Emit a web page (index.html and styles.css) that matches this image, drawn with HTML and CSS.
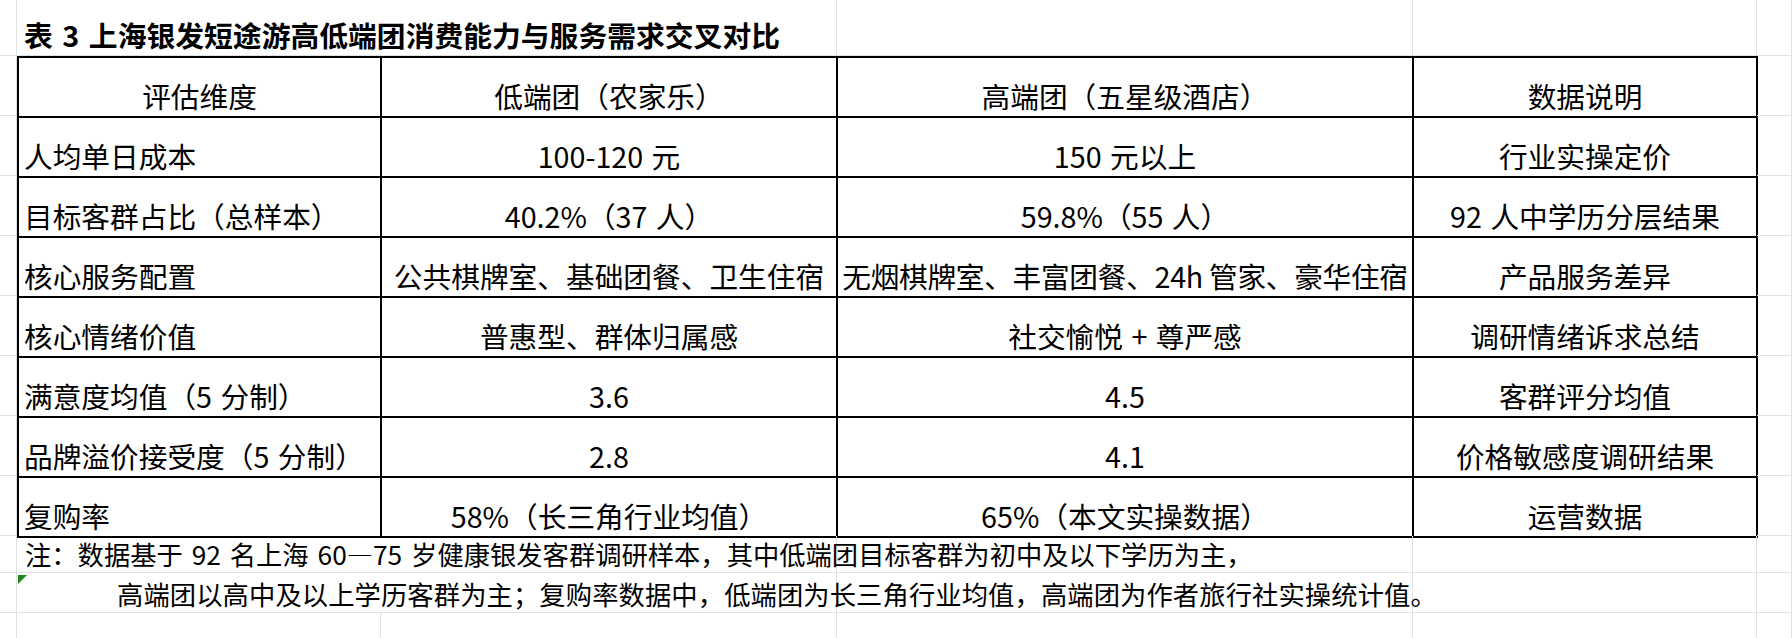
FILE: index.html
```html
<!DOCTYPE html>
<html lang="zh-CN">
<head>
<meta charset="utf-8">
<title>表 3 上海银发短途游高低端团消费能力与服务需求交叉对比</title>
<link rel="stylesheet" href="styles.css">
</head>
<body>
<div class="sheet">
  <div class="c"></div>
  <div class="c title">表 3 上海银发短途游高低端团消费能力与服务需求交叉对比</div>
  <div class="c"></div>
  <div class="c"></div>
  <div class="c"></div>

  <div class="c"></div>
  <table class="data">
    <colgroup>
      <col class="w1"><col class="w2"><col class="w3"><col class="w4">
    </colgroup>
    <tr><td class="ctr">评估维度</td><td>低端团（农家乐）</td><td>高端团（五星级酒店）</td><td>数据说明</td></tr>
    <tr><td class="lft">人均单日成本</td><td>100-120 元</td><td>150 元以上</td><td>行业实操定价</td></tr>
    <tr><td class="lft">目标客群占比（总样本）</td><td>40.2%（37 人）</td><td>59.8%（55 人）</td><td>92 人中学历分层结果</td></tr>
    <tr><td class="lft">核心服务配置</td><td>公共棋牌室、基础团餐、卫生住宿</td><td class="tight">无烟棋牌室、丰富团餐、24h 管家、豪华住宿</td><td>产品服务差异</td></tr>
    <tr><td class="lft">核心情绪价值</td><td>普惠型、群体归属感</td><td>社交愉悦 + 尊严感</td><td>调研情绪诉求总结</td></tr>
    <tr><td class="lft">满意度均值（5 分制）</td><td>3.6</td><td>4.5</td><td>客群评分均值</td></tr>
    <tr><td class="lft">品牌溢价接受度（5 分制）</td><td>2.8</td><td>4.1</td><td>价格敏感度调研结果</td></tr>
    <tr><td class="lft">复购率</td><td>58%（长三角行业均值）</td><td>65%（本文实操数据）</td><td>运营数据</td></tr>
  </table>
  <div class="c"></div>
  <div class="c"></div><div class="c"></div>
  <div class="c"></div><div class="c"></div>
  <div class="c"></div><div class="c"></div>
  <div class="c"></div><div class="c"></div>
  <div class="c"></div><div class="c"></div>
  <div class="c"></div><div class="c"></div>
  <div class="c"></div><div class="c"></div>

  <div class="c"></div>
  <div class="c note note1">注：数据基于 92 名上海 60—75 岁健康银发客群调研样本，其中低端团目标客群为初中及以下学历为主，</div>
  <div class="c"></div>
  <div class="c"></div>
  <div class="c"></div>

  <div class="c"></div>
  <div class="c note note2">高端团以高中及以上学历客群为主；复购率数据中，低端团为长三角行业均值，高端团为作者旅行社实操统计值。</div>
  <div class="c"></div>
  <div class="c"></div>
  <div class="c"></div>

  <div class="c"></div>
  <div class="c"></div>
  <div class="c"></div>
  <div class="c"></div>
  <div class="c"></div>
  <div class="c"></div>
</div>
</body>
</html>
```

FILE: styles.css
```css
html, body {
  margin: 0;
  padding: 0;
  background: #ffffff;
}

body {
  width: 1792px;
  height: 638px;
  overflow: hidden;
  font-family: "Noto Sans CJK SC", "Noto Sans", sans-serif;
  color: #000000;
}

.sheet {
  display: grid;
  grid-template-columns: 17px 364px 456px 576px 344px 1fr;
  grid-template-rows: 56px repeat(8, 60px) 37px 40px 40px;
}

.c {
  box-sizing: border-box;
  min-width: 0;
  border-right: 1px solid #e1e1e1;
  border-bottom: 1px solid #e1e1e1;
}

.title {
  grid-column: span 2;
  display: flex;
  align-items: flex-end;
  padding: 0 0 3px 7px;
  font-size: 28.8px;
  font-weight: 700;
  line-height: 34px;
  white-space: nowrap;
  word-spacing: 3px;
}

.data {
  grid-column: span 4;
  grid-row: span 8;
  align-self: start;
  width: 1741px;
  border-collapse: collapse;
  table-layout: fixed;
  border: 2px solid #000000;
  font-size: 28.7px;
  line-height: 34px;
  word-spacing: 2px;
}

.w1 { width: 363px; }
.w2 { width: 456px; }
.w3 { width: 576px; }
.w4 { width: 344px; }

.data tr {
  height: 60px;
}

.data td {
  border: 2px solid #000000;
  padding: 0 0 3px 0;
  vertical-align: bottom;
  text-align: center;
  white-space: nowrap;
  overflow: visible;
}

.data td.lft {
  text-align: left;
  padding-left: 5px;
}

.data td.tight {
  letter-spacing: -0.3px;
  word-spacing: 0;
}

.note {
  grid-column: span 2;
  position: relative;
  display: flex;
  align-items: flex-end;
  padding: 0 0 3px 8px;
  font-size: 26.3px;
  line-height: 30px;
  white-space: nowrap;
  overflow: visible;
}

.note1 {
  word-spacing: 3px;
}

.note2 {
  padding-left: 100px;
  letter-spacing: 0.1px;
}

.note2::before {
  content: "";
  position: absolute;
  left: 1px;
  top: 2px;
  width: 0;
  height: 0;
  border-top: 9px solid #1a8a1a;
  border-right: 9px solid transparent;
}
```
